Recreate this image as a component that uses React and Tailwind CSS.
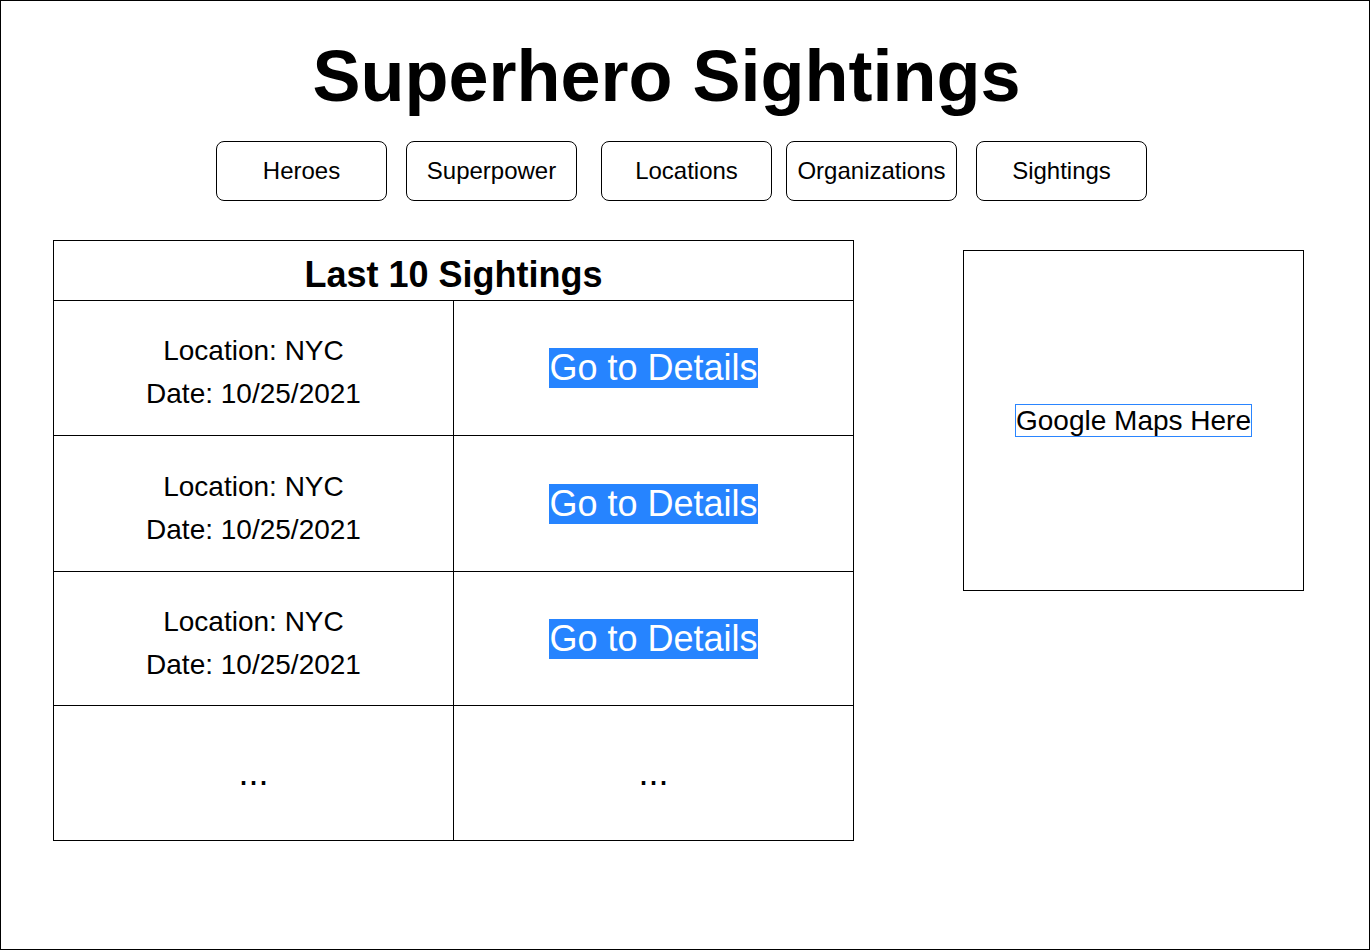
export default function App() {
  const rows = [
    { loc: "Location: NYC", date: "Date: 10/25/2021", h: "h-[135px]" },
    { loc: "Location: NYC", date: "Date: 10/25/2021", h: "h-[136px]" },
    { loc: "Location: NYC", date: "Date: 10/25/2021", h: "h-[134px]" },
  ];
  return (
    <div className="w-[1370px] h-[950px] border border-black bg-white text-black font-['Liberation_Sans',Arial,sans-serif]">
      <h1 className="mt-[39px] w-[1331px] text-center text-[72px] font-bold leading-[72px]">
        Superhero Sightings
      </h1>
      <nav className="mt-[29px] flex pl-[215px] text-[24px]">
        <div className="w-[171px] h-[60px] rounded-[8px] border border-black flex items-center justify-center">Heroes</div>
        <div className="ml-[19px] w-[171px] h-[60px] rounded-[8px] border border-black flex items-center justify-center">Superpower</div>
        <div className="ml-[24px] w-[171px] h-[60px] rounded-[8px] border border-black flex items-center justify-center">Locations</div>
        <div className="ml-[14px] w-[171px] h-[60px] rounded-[8px] border border-black flex items-center justify-center">Organizations</div>
        <div className="ml-[19px] w-[171px] h-[60px] rounded-[8px] border border-black flex items-center justify-center">Sightings</div>
      </nav>
      <div className="mt-[39px] flex items-start">
        <div className="ml-[52px] w-[801px] border border-black">
          <div className="h-[59px] pt-[9px] flex items-center justify-center text-[36px] font-bold">Last 10 Sightings</div>
          {rows.map((r, i) => (
            <div key={i} className={`flex border-t border-black ${r.h}`}>
              <div className="w-[400px] border-r border-black flex flex-col items-center justify-center text-[28px] leading-[43px] pt-[8px]">
                <div>{r.loc}</div>
                <div>{r.date}</div>
              </div>
              <div className="flex-1 flex items-center justify-center">
                <span className="bg-[#2684ff] text-white text-[36px] leading-[40px]">Go to Details</span>
              </div>
            </div>
          ))}
          <div className="flex border-t border-black h-[135px]">
            <div className="w-[400px] border-r border-black flex items-center justify-center text-[36px]">...</div>
            <div className="flex-1 flex items-center justify-center text-[36px]">...</div>
          </div>
        </div>
        <div className="ml-[109px] mt-[10px] w-[341px] h-[341px] border border-black flex items-center justify-center">
          <span className="border border-[#2a85ff] text-[28px] leading-[31px]">Google Maps Here</span>
        </div>
      </div>
    </div>
  );
}
